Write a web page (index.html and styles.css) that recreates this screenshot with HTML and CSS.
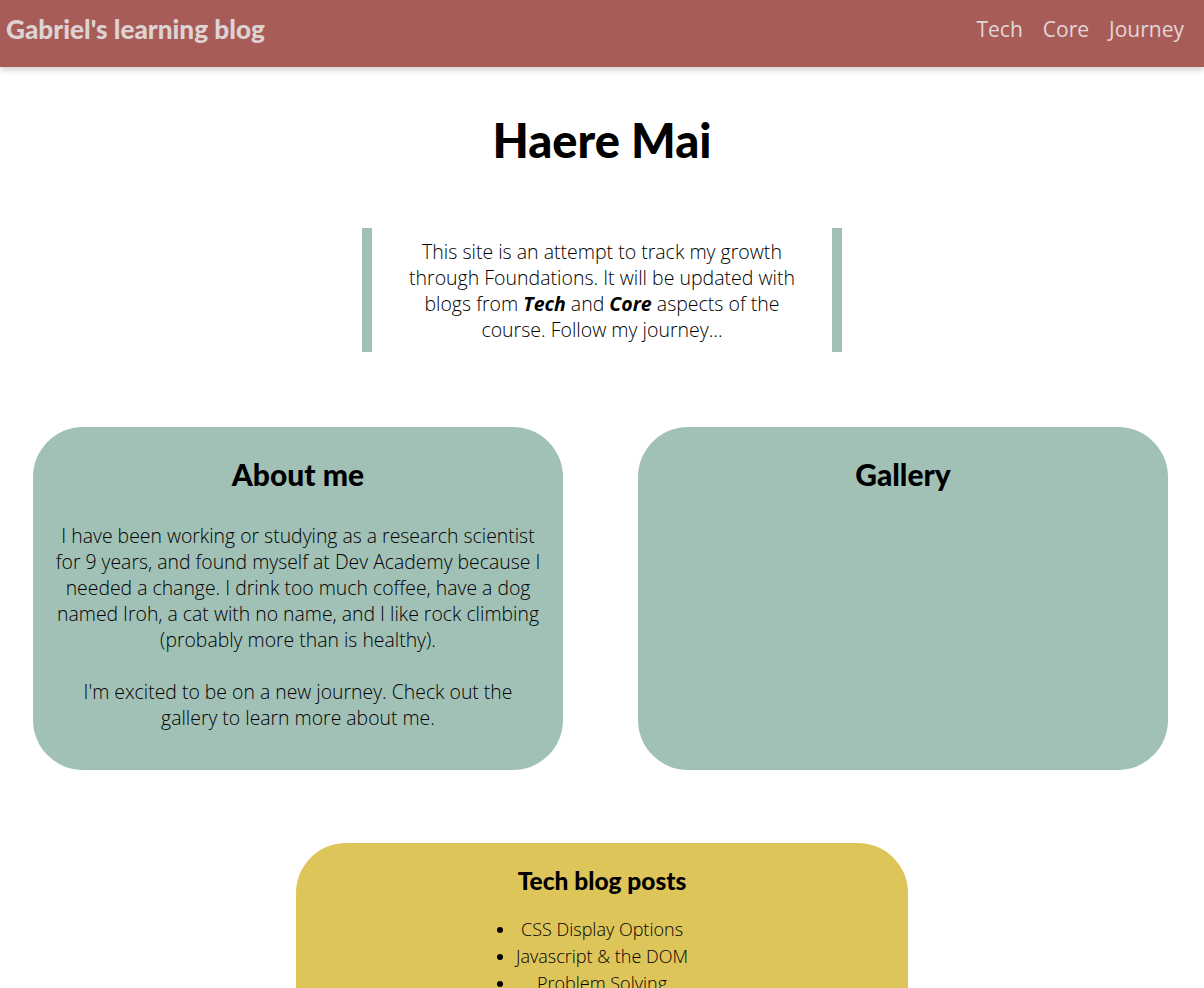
FILE: index.html
```html
<!DOCTYPE html>
<html lang="en">
<head>
<meta charset="utf-8">
<title>Gabriel's learning blog</title>
<link rel="stylesheet" href="styles.css">
</head>
<body>
<header class="topbar">
  <a class="brand" href="#">Gabriel's learning blog</a>
  <nav class="nav">
    <a href="#">Tech</a>
    <a href="#">Core</a>
    <a href="#">Journey</a>
  </nav>
</header>
<main class="main">
  <h1 class="title">Haere Mai</h1>
  <blockquote class="intro">
    This site is an attempt to track my growth through Foundations. It will be updated with blogs from <strong><em>Tech</em></strong> and <strong><em>Core</em></strong> aspects of the course. Follow my journey...
  </blockquote>
  <section class="cards">
    <article class="card">
      <h2 class="card-title">About me</h2>
      <p class="card-text">I have been working or studying as a research scientist for 9 years, and found myself at Dev Academy because I needed a change. I drink too much coffee, have a dog named Iroh, a cat with no name, and I like rock climbing (probably more than is healthy).</p>
      <p class="card-text">I'm excited to be on a new journey. Check out the gallery to learn more about me.</p>
    </article>
    <article class="card">
      <h2 class="card-title">Gallery</h2>
    </article>
  </section>
  <section class="posts">
    <h3 class="posts-title">Tech blog posts</h3>
    <ul class="posts-list">
      <li>CSS Display Options</li>
      <li>Javascript &amp; the DOM</li>
      <li>Problem Solving</li>
    </ul>
  </section>
</main>
</body>
</html>
```
FILE: styles.css
```css
* { box-sizing: border-box; }
html, body { margin: 0; padding: 0; }
body {
  font-family: "Open Sans", "Noto Sans", sans-serif;
  color: #000;
  background: #fff;
}
.topbar {
  height: 67px;
  background: #a85c58;
  display: flex;
  align-items: center;
  justify-content: space-between;
  padding: 0 20px 9px 6px;
  box-shadow: 0 3px 6px rgba(0,0,0,0.18);
}
.brand {
  font-family: "Lato", "Open Sans", sans-serif;
  font-weight: 900;
  font-size: 26.2px;
  color: #ddd3d3;
  text-decoration: none;
}
.nav { display: flex; gap: 20px; }
.nav a {
  font-family: "Open Sans", sans-serif;
  font-size: 21px;
  color: #e2d6d6;
  text-decoration: none;
}
.main { display: flex; flex-direction: column; align-items: center; }
.title {
  font-family: "Lato", sans-serif;
  font-weight: 900;
  font-size: 47px;
  margin: 45px 0 0;
  line-height: 56px;
  color: #000;
}
.intro {
  width: 480px;
  margin: 60px 0 0;
  padding: 11px 34px 9px;
  border-left: 10px solid #a2c1b6;
  border-right: 10px solid #a2c1b6;
  text-align: center;
  font-size: 19.5px;
  line-height: 26px;
  font-weight: 300;
  color: #000;
}
.intro strong { font-weight: 700; }
.cards {
  width: 100%;
  display: flex;
  gap: 75px;
  padding: 0 36px 0 33px;
  margin-top: 75px;
}
.card {
  flex: 0 0 530px;
  height: 343px;
  background: #a2c1b6;
  border-radius: 50px;
  padding: 27px 20px 0;
  text-align: center;
}
.card-title {
  font-family: "Lato", sans-serif;
  font-weight: 900;
  font-size: 30px;
  line-height: 40px;
  margin: 0 0 29px;
  color: #000;
}
.card-text {
  font-size: 19.4px;
  line-height: 26px;
  font-weight: 300;
  margin: 0 0 26px;
  color: #000;
}
.posts {
  width: 612px;
  margin-top: 73px;
  background: #dec55a;
  border-radius: 50px 50px 0 0;
  padding: 24px 0 10px;
  display: flex;
  flex-direction: column;
  align-items: center;
  text-align: center;
}
.posts-title {
  font-family: "Lato", sans-serif;
  font-weight: 900;
  font-size: 24.5px;
  line-height: 28px;
  margin: 0 0 21px;
  color: #000;
}
.posts-list {
  margin: 0;
  padding: 0;
  font-size: 18px;
  line-height: 27px;
  font-weight: 300;
  color: #000;
}
.posts-list li { text-align: center; }
```
